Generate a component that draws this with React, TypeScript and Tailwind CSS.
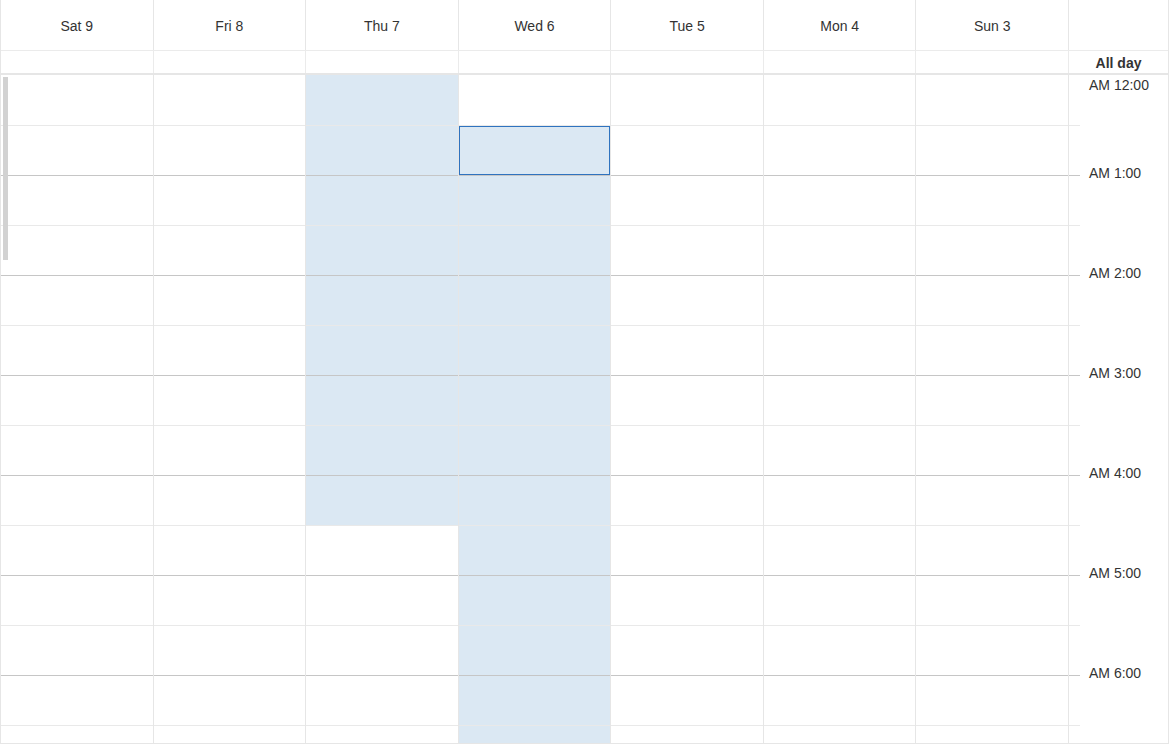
import React from "react";

const days = ["Sat 9", "Fri 8", "Thu 7", "Wed 6", "Tue 5", "Mon 4", "Sun 3"];
const ROWS = 14;
const labels = ["AM 12:00", "AM 1:00", "AM 2:00", "AM 3:00", "AM 4:00", "AM 5:00", "AM 6:00"];

function rowClass(k: number) {
  const h = k === 0 ? "h-[51px]" : "h-[50px]";
  const b = k % 2 === 0 ? "border-[#e9e9e9]" : "border-[#c6c6c6]";
  return `${h} border-b ${b}`;
}

function isBlue(day: number, k: number) {
  if (day === 2) return k <= 8;
  if (day === 3) return k >= 1;
  return false;
}

export default function App() {
  return (
    <div className="w-[1169px] h-[744px] overflow-hidden bg-white border-l border-r border-b border-[#e6e6e6] flex flex-col font-['Liberation_Sans',Arial,sans-serif] text-[14px] text-[#333]">
      {/* Header */}
      <div className="flex h-[51px] border-b border-[#ebebeb] shrink-0">
        <div className="flex flex-1">
          {days.map((d) => (
            <div key={d} className="flex-1 flex items-center justify-center pt-[2px] border-r border-[#e6e6e6]">
              {d}
            </div>
          ))}
        </div>
        <div className="w-[99px]" />
      </div>
      {/* All day row */}
      <div className="flex h-[24px] border-b-2 border-[#e6e6e6] shrink-0">
        <div className="flex flex-1">
          {days.map((d) => (
            <div key={d} className="flex-1 border-r border-[#ebebeb]" />
          ))}
        </div>
        <div className="w-[99px] flex items-center justify-center pt-[2px] font-bold leading-none">All day</div>
      </div>
      {/* Body */}
      <div className="relative flex flex-1 overflow-hidden">
        <div className="flex flex-1">
          {days.map((d, di) => (
            <div key={d} className="flex-1 flex flex-col border-r border-[#e6e6e6]">
              {Array.from({ length: ROWS }).map((_, k) => (
                <div key={k} className={`${rowClass(k)} shrink-0 ${isBlue(di, k) ? "bg-[#dbe8f3]" : "bg-white"}`}>
                  {di === 3 && k === 1 ? (
                    <div className="w-full h-full border border-[#2f73bf]" />
                  ) : null}
                </div>
              ))}
            </div>
          ))}
        </div>
        <div className="w-[99px] flex">
          <div className="w-[11px] flex flex-col">
            {Array.from({ length: ROWS }).map((_, k) => (
              <div key={k} className={`${rowClass(k)} shrink-0`} />
            ))}
          </div>
          <div className="flex-1 flex flex-col pt-[2px] pl-[9px]">
            {labels.map((l, i) => (
              <div key={l} className={`${i === 0 ? "h-[88px]" : "h-[100px]"} shrink-0 leading-[16px] whitespace-nowrap`}>
                {l}
              </div>
            ))}
          </div>
        </div>
        <div className="absolute left-[2px] top-[2px] w-[5px] h-[183px] bg-[#d2d2d2]" />
      </div>
    </div>
  );
}
